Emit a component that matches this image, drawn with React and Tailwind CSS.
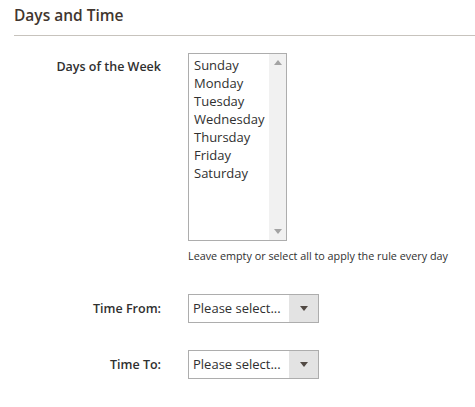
export default function App() {
  const days = ["Sunday", "Monday", "Tuesday", "Wednesday", "Thursday", "Friday", "Saturday"];

  return (
    <div className="min-h-screen bg-white font-['Open_Sans',sans-serif] text-[#303030]">
      <div className="pl-[14px]">
        <div className="border-b border-[#c7c3bd] pt-[6px] pb-[10px]">
          <h2 className="text-[15.5px] leading-[19px] font-semibold text-[#41362f]">Days and Time</h2>
        </div>

        <div className="mt-[17px] flex">
          <div className="w-[147px] pt-[5px] text-right text-[12.5px] font-semibold leading-[18px]">
            Days of the Week
          </div>
          <div className="ml-[27px]">
            <div className="flex h-[188px] w-[99px] border border-[#adadad]">
              <ul className="flex-1 pt-[2px] pl-[5px] text-[13px] leading-[18px]">
                {days.map((d) => (
                  <li key={d}>{d}</li>
                ))}
              </ul>
              <div className="flex w-[17px] flex-col items-center justify-between bg-[#f1f1f1] py-[6px]">
                <svg width="8" height="5" viewBox="0 0 8 5">
                  <path d="M0 5 L4 0 L8 5 Z" fill="#a3a3a3" />
                </svg>
                <svg width="8" height="5" viewBox="0 0 8 5">
                  <path d="M0 0 L8 0 L4 5 Z" fill="#a3a3a3" />
                </svg>
              </div>
            </div>
            <p className="mt-[7px] text-[10.8px] leading-[16px]">
              Leave empty or select all to apply the rule every day
            </p>
          </div>
        </div>

        {["Time From:", "Time To:"].map((label, i) => (
          <div key={label} className={`flex items-center ${i === 0 ? "mt-[30px]" : "mt-[27px]"}`}>
            <div className="w-[147px] text-right text-[12.5px] font-semibold leading-[18px]">{label}</div>
            <div className="ml-[27px] flex h-[29px] w-[131px] border border-[#adadad]">
              <span className="flex-1 pl-[4px] text-[13px] leading-[27px]">Please select...</span>
              <span className="flex w-[29px] items-center justify-center bg-[#e3e3e3]">
                <svg width="8" height="5" viewBox="0 0 8 5">
                  <path d="M0 0 L8 0 L4 5 Z" fill="#514943" />
                </svg>
              </span>
            </div>
          </div>
        ))}
      </div>
    </div>
  );
}
